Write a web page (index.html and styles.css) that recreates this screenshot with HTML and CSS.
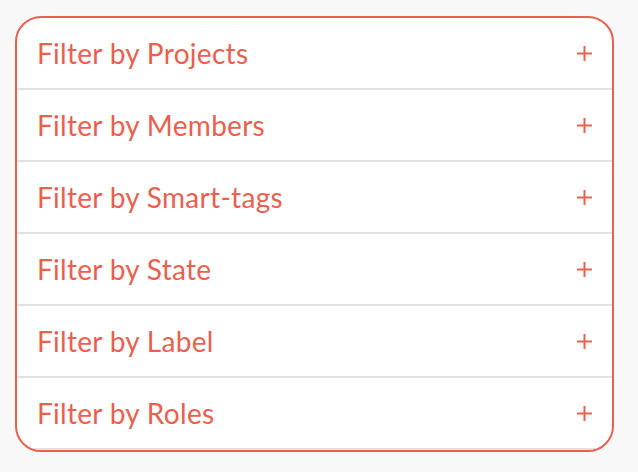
FILE: index.html
```html
<!DOCTYPE html>
<html lang="en">
<head>
  <meta charset="UTF-8">
  <title>Filters</title>
  <link rel="stylesheet" href="styles.css">
</head>
<body>

<div class="filtros">
  <div class="filtro">
    <span class="filtro-nome">Filter by Projects</span>
    <svg class="mais" width="15" height="15" viewBox="0 0 15 15"><path d="M7.5 0v15M0 7.5h15"/></svg>
  </div>
  <div class="filtro">
    <span class="filtro-nome">Filter by Members</span>
    <svg class="mais" width="15" height="15" viewBox="0 0 15 15"><path d="M7.5 0v15M0 7.5h15"/></svg>
  </div>
  <div class="filtro">
    <span class="filtro-nome">Filter by Smart-tags</span>
    <svg class="mais" width="15" height="15" viewBox="0 0 15 15"><path d="M7.5 0v15M0 7.5h15"/></svg>
  </div>
  <div class="filtro">
    <span class="filtro-nome">Filter by State</span>
    <svg class="mais" width="15" height="15" viewBox="0 0 15 15"><path d="M7.5 0v15M0 7.5h15"/></svg>
  </div>
  <div class="filtro">
    <span class="filtro-nome">Filter by Label</span>
    <svg class="mais" width="15" height="15" viewBox="0 0 15 15"><path d="M7.5 0v15M0 7.5h15"/></svg>
  </div>
  <div class="filtro">
    <span class="filtro-nome">Filter by Roles</span>
    <svg class="mais" width="15" height="15" viewBox="0 0 15 15"><path d="M7.5 0v15M0 7.5h15"/></svg>
  </div>
</div>

</body>
</html>
```

FILE: styles.css
```css
html {
  font-family: "Lato", sans-serif;
}

body {
  margin: 0;
  padding: 16px 15px;
  background: #f8f8f8;
}

.filtros {
  width: 599px;
  box-sizing: border-box;
  border: 2px solid #e9604f;
  border-radius: 26px;
  background: #fff;
  overflow: hidden;
}

.filtro {
  height: 72px;
  box-sizing: border-box;
  border-bottom: 2px solid #e2e2e2;
  display: flex;
  align-items: center;
  justify-content: space-between;
  padding: 0 20px 0 20px;
  color: #e9604f;
}

.filtro-nome {
  font-size: 28px;
  letter-spacing: 0.3px;
}

.mais {
  stroke: #e9604f;
  stroke-width: 2;
  fill: none;
}
```
